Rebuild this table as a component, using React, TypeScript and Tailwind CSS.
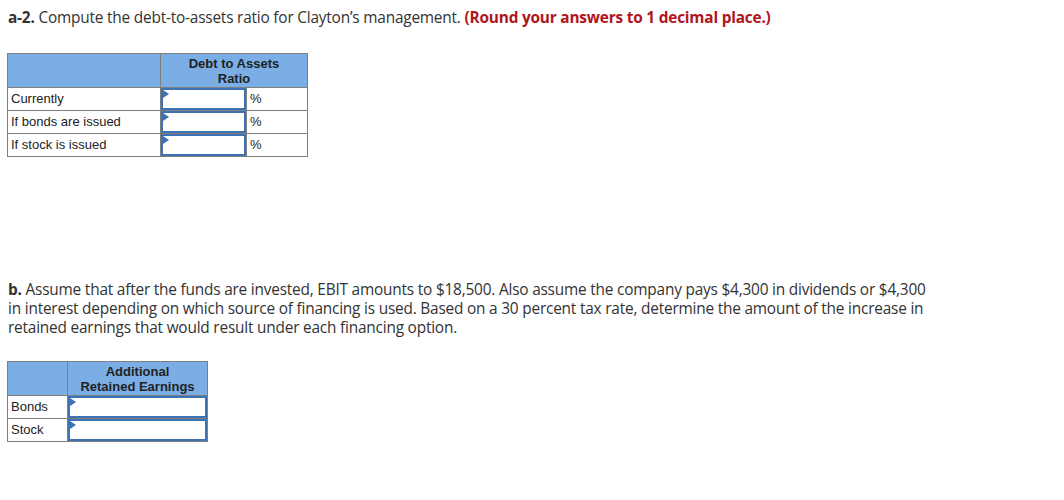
import React from "react";

function AnswerInput() {
  return (
    <div className="relative h-[22px] w-full border-2 border-[#3d72b4] bg-white">
      <span className="absolute left-0 top-0 h-0 w-0 border-y-[4px] border-l-[6px] border-y-transparent border-l-[#3d72b4]" />
    </div>
  );
}

const border = "border border-[#7f7f7f]";
const bodyCell = `${border} px-[3px] text-left align-middle`;
const headCell = `${border} text-center align-middle font-bold leading-[15px]`;

export default function App() {
  const rows1 = ["Currently", "If bonds are issued", "If stock is issued"];
  const rows2 = ["Bonds", "Stock"];
  return (
    <div className="min-h-[500px] w-[1064px] bg-white px-[8px] pt-[9px] text-[#333] [font-family:'Open_Sans',sans-serif]">
      <p className="text-[15.4px] leading-[18px] tracking-[-0.2px]">
        <b className="font-bold">a-2.</b> Compute the debt-to-assets ratio for Clayton’s management.{" "}
        <b className="font-bold text-[#b0151c]">(Round your answers to 1 decimal place.)</b>
      </p>

      <table className="ml-[-1px] mt-[26px] border-collapse text-[13px] text-[#222] [font-family:'Liberation_Sans',Arial,sans-serif]">
        <thead>
          <tr className="h-[34px] bg-[#7baee5]">
            <th className={`${headCell} w-[153px]`}></th>
            <th className={headCell} colSpan={2}>
              Debt to Assets
              <br />
              Ratio
            </th>
          </tr>
        </thead>
        <tbody>
          {rows1.map((r) => (
            <tr key={r} className="h-[23px]">
              <td className={bodyCell}>{r}</td>
              <td className={`${border} w-[86px] p-0`}>
                <AnswerInput />
              </td>
              <td className={`${bodyCell} w-[61px]`}>%</td>
            </tr>
          ))}
        </tbody>
      </table>

      <p className="mt-[123px] text-[15.4px] leading-[19px] tracking-[-0.2px]">
        <b className="font-bold">b.</b> Assume that after the funds are invested, EBIT amounts to $18,500. Also assume the company pays $4,300 in dividends or $4,300
        <br />
        in interest depending on which source of financing is used. Based on a 30 percent tax rate, determine the amount of the increase in
        <br />
        retained earnings that would result under each financing option.
      </p>

      <table className="ml-[-1px] mt-[24px] border-collapse text-[13px] text-[#222] [font-family:'Liberation_Sans',Arial,sans-serif]">
        <thead>
          <tr className="h-[34px] bg-[#7baee5]">
            <th className={`${headCell} w-[60px]`}></th>
            <th className={`${headCell} w-[140px]`}>
              Additional
              <br />
              Retained Earnings
            </th>
          </tr>
        </thead>
        <tbody>
          {rows2.map((r) => (
            <tr key={r} className="h-[23px]">
              <td className={bodyCell}>{r}</td>
              <td className={`${border} p-0`}>
                <AnswerInput />
              </td>
            </tr>
          ))}
        </tbody>
      </table>
    </div>
  );
}
